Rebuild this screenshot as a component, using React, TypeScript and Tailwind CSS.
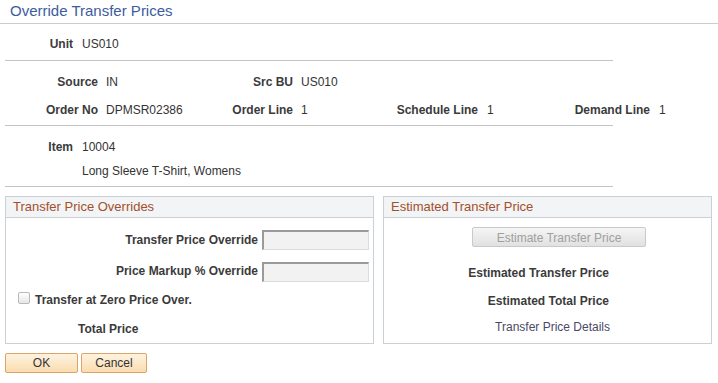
import React from 'react';

const font = { fontFamily: '"Liberation Sans", Arial, sans-serif' };

function Pair({
  label,
  value,
  labelW,
  valueW,
  gap = 'ml-[8px]',
}: {
  label: string;
  value: string;
  labelW: string;
  valueW: string;
  gap?: string;
}) {
  return (
    <>
      <div className={`${labelW} shrink-0 whitespace-nowrap text-right font-bold text-[#3b3b3b]`}>{label}</div>
      <div className={`${gap} ${valueW} shrink-0 whitespace-nowrap text-[#333]`}>{value}</div>
    </>
  );
}

function GroupBox({ title, width, children }: { title: string; width: string; children: React.ReactNode }) {
  return (
    <div className={`${width} shrink-0 border border-[#cbd0d5] flex flex-col`}>
      <div className="h-[21px] border-b border-[#cbd0d5] bg-[#f2f4f5] pl-[7px] flex items-center text-[13px] text-[#a3502c]">
        {title}
      </div>
      <div className="flex-1 flex flex-col">{children}</div>
    </div>
  );
}

function Input() {
  return (
    <div className="ml-[4px] w-[107px] h-[20px] bg-[#f2f2f2] border-t-2 border-l-2 border-r border-b border-t-[#9a9a9a] border-l-[#9a9a9a] border-r-[#dcdcdc] border-b-[#dcdcdc]" />
  );
}

export default function App() {
  return (
    <div style={font} className="w-[718px] h-[383px] bg-white text-[12px] text-[#333] overflow-hidden">
      {/* Page title */}
      <div className="h-[24px] border-b border-[#cccccc] pl-[10px] flex items-center text-[15px] text-[#3d5c9e]">
        Override Transfer Prices
      </div>

      {/* Unit */}
      <div className="ml-[5px] w-[608px] border-b border-[#c4c4c4] pt-[10px] pb-[6px]">
        <div className="-ml-[5px] h-[20px] flex items-center">
          <Pair label="Unit" value="US010" labelW="w-[73px]" valueW="w-[120px]" gap="ml-[9px]" />
        </div>
      </div>

      {/* Source / order */}
      <div className="ml-[5px] w-[608px] border-b border-[#c4c4c4] pt-[11px] pb-[5px] flex flex-col gap-[8px]">
        <div className="-ml-[5px] h-[20px] flex items-center">
          <Pair label="Source" value="IN" labelW="w-[98px]" valueW="w-[100px]" />
          <Pair label="Src BU" value="US010" labelW="w-[87px]" valueW="w-[100px]" />
        </div>
        <div className="-ml-[5px] h-[20px] flex items-center">
          <Pair label="Order No" value="DPMSR02386" labelW="w-[98px]" valueW="w-[100px]" />
          <Pair label="Order Line" value="1" labelW="w-[87px]" valueW="w-[80px]" />
          <Pair label="Schedule Line" value="1" labelW="w-[97px]" valueW="w-[80px]" gap="ml-[9px]" />
          <Pair label="Demand Line" value="1" labelW="w-[83px]" valueW="w-[40px]" gap="ml-[9px]" />
        </div>
      </div>

      {/* Item */}
      <div className="ml-[5px] w-[608px] border-b border-[#c4c4c4] pt-[11px] pb-[5px] flex flex-col gap-[4px]">
        <div className="-ml-[5px] h-[20px] flex items-center">
          <Pair label="Item" value="10004" labelW="w-[73px]" valueW="w-[120px]" gap="ml-[9px]" />
        </div>
        <div className="h-[20px] flex items-center pl-[77px]">Long Sleeve T-Shirt, Womens</div>
      </div>

      {/* Group boxes */}
      <div className="mt-[9px] ml-[5px] flex">
        <GroupBox title="Transfer Price Overrides" width="w-[369px]">
          <div className="pt-[12px] pb-[4px] flex flex-col">
            <div className="h-[20px] flex items-center">
              <div className="w-[252px] text-right font-bold text-[#3b3b3b]">Transfer Price Override</div>
              <Input />
            </div>
            <div className="mt-[12px] h-[20px] flex items-center">
              <div className="w-[252px] -mt-[2px] text-right font-bold text-[#3b3b3b]">Price Markup % Override</div>
              <Input />
            </div>
            <div className="mt-[8px] h-[20px] flex items-center pl-[12px]">
              <span className="w-[12px] h-[12px] -mt-[4px] rounded-[2px] border border-[#b9b9b9] bg-gradient-to-b from-white to-[#e6e6e6]" />
              <span className="ml-[5px] font-bold text-[#3b3b3b]">Transfer at Zero Price Over.</span>
            </div>
            <div className="mt-[9px] h-[20px] flex items-center pl-[72px] font-bold text-[#3b3b3b]">Total Price</div>
          </div>
        </GroupBox>

        <div className="ml-[9px]">
          <GroupBox title="Estimated Transfer Price" width="w-[329px] h-full">
            <div className="pt-[9px] flex flex-col">
              <div className="ml-[88px] w-[174px] h-[20px] pt-[2px] rounded-[2px] border border-[#c9c9c9] bg-gradient-to-b from-[#f5f5f5] to-[#e1e1e1] flex items-center justify-center text-[#a0a0a0]">
                Estimate Transfer Price
              </div>
              <div className="mt-[16px] h-[20px] flex items-center">
                <div className="w-[225px] text-right font-bold text-[#3b3b3b]">Estimated Transfer Price</div>
              </div>
              <div className="mt-[8px] h-[20px] flex items-center">
                <div className="w-[225px] text-right font-bold text-[#3b3b3b]">Estimated Total Price</div>
              </div>
              <div className="mt-[6px] h-[20px] flex items-center">
                <div className="w-[226px] text-right text-[#4b4868]">Transfer Price Details</div>
              </div>
            </div>
          </GroupBox>
        </div>
      </div>

      {/* Buttons */}
      <div className="mt-[9px] ml-[5px] flex gap-[3px]">
        <button className="w-[73px] h-[20px] rounded-[2px] border border-[#dca466] bg-gradient-to-b from-[#fdf3e2] to-[#fbdcae] text-[12px] text-[#333] flex items-center justify-center">
          OK
        </button>
        <button className="w-[66px] h-[20px] rounded-[2px] border border-[#dca466] bg-gradient-to-b from-[#fdf3e2] to-[#fbdcae] text-[12px] text-[#333] flex items-center justify-center">
          Cancel
        </button>
      </div>
    </div>
  );
}
